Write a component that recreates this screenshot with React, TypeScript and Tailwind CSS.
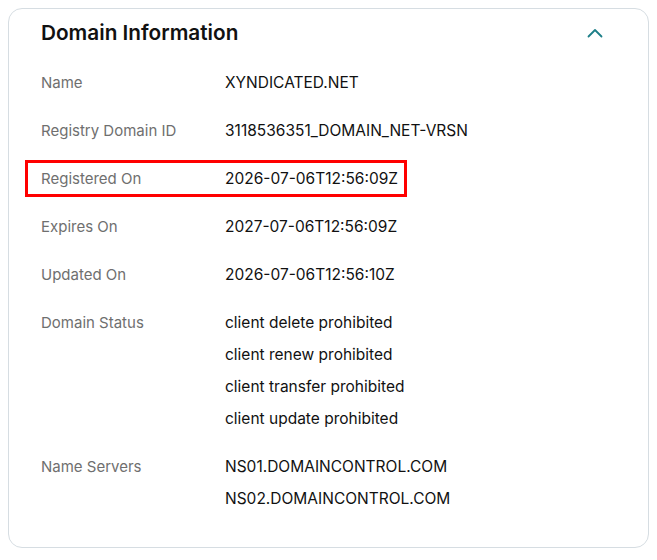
import type { ReactNode } from "react";

interface Row {
  label: string;
  values: string[];
  highlight?: boolean;
}

const rows: Row[] = [
  { label: "Name", values: ["XYNDICATED.NET"] },
  { label: "Registry Domain ID", values: ["3118536351_DOMAIN_NET-VRSN"] },
  { label: "Registered On", values: ["2026-07-06T12:56:09Z"], highlight: true },
  { label: "Expires On", values: ["2027-07-06T12:56:09Z"] },
  { label: "Updated On", values: ["2026-07-06T12:56:10Z"] },
  {
    label: "Domain Status",
    values: [
      "client delete prohibited",
      "client renew prohibited",
      "client transfer prohibited",
      "client update prohibited",
    ],
  },
  {
    label: "Name Servers",
    values: ["NS01.DOMAINCONTROL.COM", "NS02.DOMAINCONTROL.COM"],
  },
];

function ChevronUp() {
  return (
    <svg width="16" height="10" viewBox="0 0 16 10" fill="none">
      <path
        d="M1.5 8.5 8 2l6.5 6.5"
        stroke="#1d7f88"
        strokeWidth="1.8"
        strokeLinecap="round"
        strokeLinejoin="round"
      />
    </svg>
  );
}

function InfoRow({ row }: { row: Row }): ReactNode {
  return (
    <div className="relative grid grid-cols-[184px_1fr] py-3">
      {row.highlight && (
        <span className="pointer-events-none absolute top-[5px] bottom-[6px] left-[-16px] w-[382px] border-[3px] border-[#ff0000]" />
      )}
      <div className="text-[15px] leading-6 text-[#6f6f6f]">{row.label}</div>
      <div className="flex flex-col gap-2">
        {row.values.map((v) => (
          <div key={v} className="leading-6 text-[#111111]">
            {v}
          </div>
        ))}
      </div>
    </div>
  );
}

export default function App() {
  return (
    <div className="bg-white p-2 font-['Inter','Noto_Sans',sans-serif] text-[15.5px]">
      <div className="rounded-[14px] border border-[#d6dde2] bg-white pt-[10px] pb-[24px] pl-[32px] pr-[45px]">
        <div className="flex items-center justify-between">
          <h2 className="text-[20.75px] leading-7 font-semibold text-[#111111]">
            Domain Information
          </h2>
          <ChevronUp />
        </div>
        <div className="mt-3">
          {rows.map((row) => (
            <InfoRow key={row.label} row={row} />
          ))}
        </div>
      </div>
    </div>
  );
}
